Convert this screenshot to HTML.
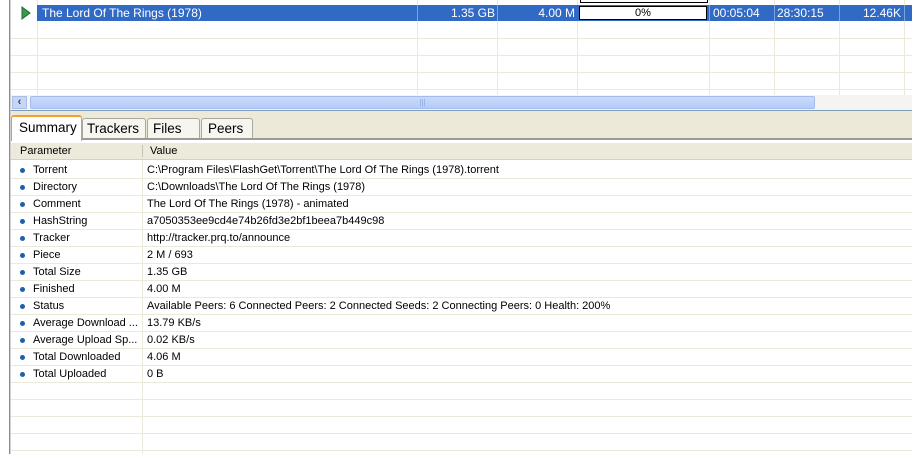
<!DOCTYPE html>
<html><head><style>
body{margin:0;width:912px;height:454px;overflow:hidden;background:#fff;font-family:"Liberation Sans",sans-serif;font-size:11px;color:#000;position:relative}
.a{position:absolute}
.vl{position:absolute;width:1px;background:#ece9d8}
.hl{position:absolute;height:1px;background:#ece9d8}
.row{position:absolute;left:0;width:912px;height:17px;line-height:17px;padding-top:2px}
.dot{position:absolute;left:20px;top:8px;width:5px;height:5px;border-radius:50%;background:#1f5fa8}
.k{position:absolute;left:33px}
.v{position:absolute;left:147px;white-space:nowrap}
.tab{position:absolute;top:118px;height:20px;line-height:20px;font-size:13.5px;background:#f6f5ef;border:1px solid #a8a8a0;border-bottom:none;border-radius:3px 3px 0 0;padding-left:5px;box-sizing:border-box}
</style></head><body>
<div class="a" style="left:9px;top:0;width:1px;height:454px;background:#8d8d8d"></div>
<div class="a" style="left:10px;top:0;width:1px;height:454px;background:#d0d0d0"></div>
<div class="a" style="left:11px;top:0;width:901px;height:95px;background:#fff"></div>
<div class="vl" style="left:37px;top:0;height:95px"></div>
<div class="vl" style="left:417px;top:0;height:95px"></div>
<div class="vl" style="left:497px;top:0;height:95px"></div>
<div class="vl" style="left:577px;top:0;height:95px"></div>
<div class="vl" style="left:709px;top:0;height:95px"></div>
<div class="vl" style="left:774px;top:0;height:95px"></div>
<div class="vl" style="left:839px;top:0;height:95px"></div>
<div class="vl" style="left:904px;top:0;height:95px"></div>
<div class="hl" style="left:11px;top:38px;width:901px"></div>
<div class="hl" style="left:11px;top:55px;width:901px"></div>
<div class="hl" style="left:11px;top:72px;width:901px"></div>
<div class="hl" style="left:11px;top:89px;width:901px"></div>
<div class="a" style="left:580px;top:0;width:126px;height:2px;border:1px solid #000;border-top:none;background:#fff"></div>
<div class="a" style="left:37px;top:5px;width:875px;height:16px;background:#316ac5;color:#fff;font-size:12px;line-height:16px">
 <span class="a" style="left:5px">The Lord Of The Rings (1978)</span>
 <span class="a" style="right:417px">1.35 GB</span>
 <span class="a" style="right:337px">4.00 M</span>
 <span class="a" style="left:542px;top:1px;width:126px;height:12px;background:#fff;border:1px solid #000;color:#000;text-align:center;line-height:12px;font-size:11px">0%</span>
 <span class="a" style="left:676px">00:05:04</span>
 <span class="a" style="left:740px">28:30:15</span>
 <span class="a" style="right:11px">12.46K</span>
 <span class="a" style="left:380px;top:0;width:1px;height:16px;background:#7fa2dc"></span>
 <span class="a" style="left:460px;top:0;width:1px;height:16px;background:#7fa2dc"></span>
 <span class="a" style="left:672px;top:0;width:1px;height:16px;background:#7fa2dc"></span>
 <span class="a" style="left:737px;top:0;width:1px;height:16px;background:#7fa2dc"></span>
 <span class="a" style="left:802px;top:0;width:1px;height:16px;background:#7fa2dc"></span>
 <span class="a" style="left:867px;top:0;width:1px;height:16px;background:#7fa2dc"></span>
</div>
<svg class="a" style="left:20px;top:6px" width="12" height="14"><path d="M2 1 L10 7 L2 13 Z" fill="#3a9a4a" stroke="#1f6a2a"/></svg>
<div class="a" style="left:11px;top:95px;width:901px;height:15px;background:#f4f4f0"></div>
<div class="a" style="left:12px;top:96px;width:15px;height:13px;background:#c8d6f4;border:1px solid #a9bde6;box-sizing:border-box;color:#2c3e80;font-size:11px;line-height:11px;text-align:center;font-weight:bold">&lsaquo;</div>
<div class="a" style="left:30px;top:96px;width:785px;height:13px;background:linear-gradient(#c9dafc,#b5cbf7);border:1px solid #a3bbef;box-sizing:border-box;border-radius:2px;text-align:center;color:#8aa6e0;font-size:8px;line-height:11px">|||</div>
<div class="a" style="left:11px;top:110px;width:901px;height:1px;background:#7f9db9"></div>
<div class="a" style="left:11px;top:111px;width:901px;height:32px;background:#ece9d8"></div>
<div class="a" style="left:11px;top:138px;width:901px;height:2px;background:#9c9b92"></div>
<div class="a" style="left:11px;top:140px;width:901px;height:3px;background:#fff"></div>
<div class="tab" style="left:82px;width:64px;padding-left:4px">Trackers</div>
<div class="tab" style="left:147px;width:53px">Files</div>
<div class="tab" style="left:201px;width:52px;padding-left:6px">Peers</div>
<div class="tab" style="left:11px;top:115px;width:71px;height:26px;background:#fff;border-top:2px solid #f0a030;line-height:22px;padding-left:7px">Summary</div>
<div class="a" style="left:11px;top:143px;width:901px;height:17px;background:#ebeadb;border-bottom:1px solid #d6d2c2;box-sizing:border-box;line-height:17px">
 <span class="a" style="left:9px">Parameter</span>
 <span class="a" style="left:131px;top:2px;width:1px;height:12px;background:#c7c5b2"></span>
 <span class="a" style="left:139px">Value</span>
</div>
<div class="vl" style="left:142px;top:160px;height:294px"></div>
<div class="row" style="top:160px"><i class="dot"></i><span class="k">Torrent</span><span class="v">C:\Program Files\FlashGet\Torrent\The Lord Of The Rings (1978).torrent</span></div>
<div class="row" style="top:177px"><i class="dot"></i><span class="k">Directory</span><span class="v">C:\Downloads\The Lord Of The Rings (1978)</span></div>
<div class="row" style="top:194px"><i class="dot"></i><span class="k">Comment</span><span class="v">The Lord Of The Rings (1978) - animated</span></div>
<div class="row" style="top:211px"><i class="dot"></i><span class="k">HashString</span><span class="v">a7050353ee9cd4e74b26fd3e2bf1beea7b449c98</span></div>
<div class="row" style="top:228px"><i class="dot"></i><span class="k">Tracker</span><span class="v">http://tracker.prq.to/announce</span></div>
<div class="row" style="top:245px"><i class="dot"></i><span class="k">Piece</span><span class="v">2 M / 693</span></div>
<div class="row" style="top:262px"><i class="dot"></i><span class="k">Total Size</span><span class="v">1.35 GB</span></div>
<div class="row" style="top:279px"><i class="dot"></i><span class="k">Finished</span><span class="v">4.00 M</span></div>
<div class="row" style="top:296px"><i class="dot"></i><span class="k">Status</span><span class="v">Available Peers: 6 Connected Peers: 2 Connected Seeds: 2 Connecting Peers: 0 Health: 200%</span></div>
<div class="row" style="top:313px"><i class="dot"></i><span class="k">Average Download ...</span><span class="v">13.79 KB/s</span></div>
<div class="row" style="top:330px"><i class="dot"></i><span class="k">Average Upload Sp...</span><span class="v">0.02 KB/s</span></div>
<div class="row" style="top:347px"><i class="dot"></i><span class="k">Total Downloaded</span><span class="v">4.06 M</span></div>
<div class="row" style="top:364px"><i class="dot"></i><span class="k">Total Uploaded</span><span class="v">0 B</span></div>
<div class="hl" style="left:11px;top:178px;width:901px"></div>
<div class="hl" style="left:11px;top:195px;width:901px"></div>
<div class="hl" style="left:11px;top:212px;width:901px"></div>
<div class="hl" style="left:11px;top:229px;width:901px"></div>
<div class="hl" style="left:11px;top:246px;width:901px"></div>
<div class="hl" style="left:11px;top:263px;width:901px"></div>
<div class="hl" style="left:11px;top:280px;width:901px"></div>
<div class="hl" style="left:11px;top:297px;width:901px"></div>
<div class="hl" style="left:11px;top:314px;width:901px"></div>
<div class="hl" style="left:11px;top:331px;width:901px"></div>
<div class="hl" style="left:11px;top:348px;width:901px"></div>
<div class="hl" style="left:11px;top:365px;width:901px"></div>
<div class="hl" style="left:11px;top:382px;width:901px"></div>
<div class="hl" style="left:11px;top:399px;width:901px"></div>
<div class="hl" style="left:11px;top:416px;width:901px"></div>
<div class="hl" style="left:11px;top:433px;width:901px"></div>
<div class="hl" style="left:11px;top:450px;width:901px"></div>
</body></html>
